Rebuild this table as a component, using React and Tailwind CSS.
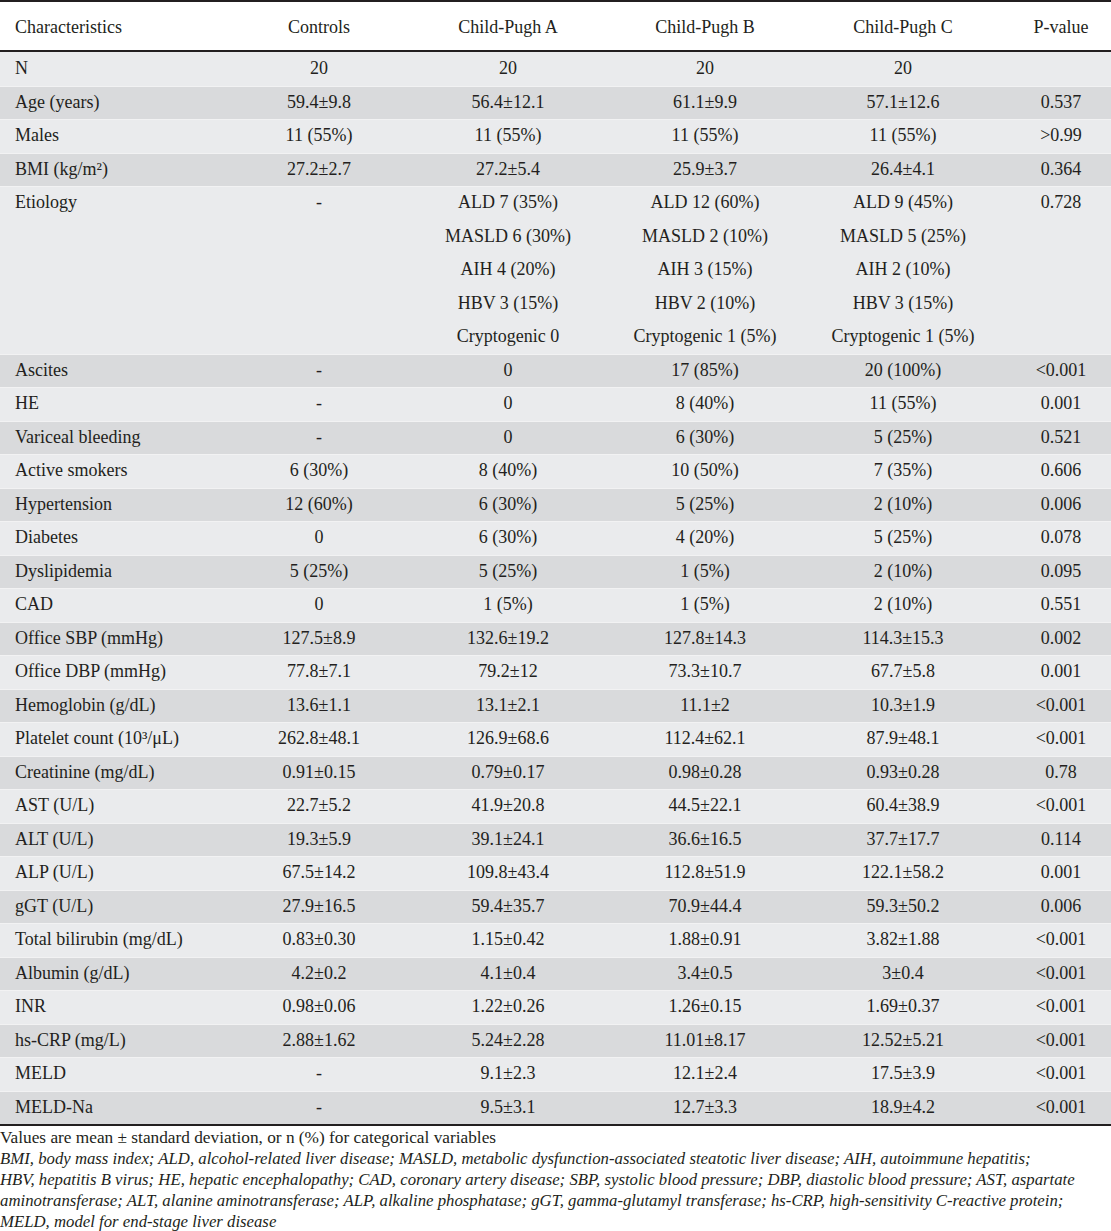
const rows = [
  ["N", "20", "20", "20", "20", ""],
  ["Age (years)", "59.4±9.8", "56.4±12.1", "61.1±9.9", "57.1±12.6", "0.537"],
  ["Males", "11 (55%)", "11 (55%)", "11 (55%)", "11 (55%)", ">0.99"],
  ["BMI (kg/m²)", "27.2±2.7", "27.2±5.4", "25.9±3.7", "26.4±4.1", "0.364"],
  [
    "Etiology",
    "-",
    ["ALD 7 (35%)", "MASLD 6 (30%)", "AIH 4 (20%)", "HBV 3 (15%)", "Cryptogenic 0"],
    ["ALD 12 (60%)", "MASLD 2 (10%)", "AIH 3 (15%)", "HBV 2 (10%)", "Cryptogenic 1 (5%)"],
    ["ALD 9 (45%)", "MASLD 5 (25%)", "AIH 2 (10%)", "HBV 3 (15%)", "Cryptogenic 1 (5%)"],
    "0.728",
  ],
  ["Ascites", "-", "0", "17 (85%)", "20 (100%)", "<0.001"],
  ["HE", "-", "0", "8 (40%)", "11 (55%)", "0.001"],
  ["Variceal bleeding", "-", "0", "6 (30%)", "5 (25%)", "0.521"],
  ["Active smokers", "6 (30%)", "8 (40%)", "10 (50%)", "7 (35%)", "0.606"],
  ["Hypertension", "12 (60%)", "6 (30%)", "5 (25%)", "2 (10%)", "0.006"],
  ["Diabetes", "0", "6 (30%)", "4 (20%)", "5 (25%)", "0.078"],
  ["Dyslipidemia", "5 (25%)", "5 (25%)", "1 (5%)", "2 (10%)", "0.095"],
  ["CAD", "0", "1 (5%)", "1 (5%)", "2 (10%)", "0.551"],
  ["Office SBP (mmHg)", "127.5±8.9", "132.6±19.2", "127.8±14.3", "114.3±15.3", "0.002"],
  ["Office DBP (mmHg)", "77.8±7.1", "79.2±12", "73.3±10.7", "67.7±5.8", "0.001"],
  ["Hemoglobin (g/dL)", "13.6±1.1", "13.1±2.1", "11.1±2", "10.3±1.9", "<0.001"],
  ["Platelet count (10³/μL)", "262.8±48.1", "126.9±68.6", "112.4±62.1", "87.9±48.1", "<0.001"],
  ["Creatinine (mg/dL)", "0.91±0.15", "0.79±0.17", "0.98±0.28", "0.93±0.28", "0.78"],
  ["AST (U/L)", "22.7±5.2", "41.9±20.8", "44.5±22.1", "60.4±38.9", "<0.001"],
  ["ALT (U/L)", "19.3±5.9", "39.1±24.1", "36.6±16.5", "37.7±17.7", "0.114"],
  ["ALP (U/L)", "67.5±14.2", "109.8±43.4", "112.8±51.9", "122.1±58.2", "0.001"],
  ["gGT (U/L)", "27.9±16.5", "59.4±35.7", "70.9±44.4", "59.3±50.2", "0.006"],
  ["Total bilirubin (mg/dL)", "0.83±0.30", "1.15±0.42", "1.88±0.91", "3.82±1.88", "<0.001"],
  ["Albumin (g/dL)", "4.2±0.2", "4.1±0.4", "3.4±0.5", "3±0.4", "<0.001"],
  ["INR", "0.98±0.06", "1.22±0.26", "1.26±0.15", "1.69±0.37", "<0.001"],
  ["hs-CRP (mg/L)", "2.88±1.62", "5.24±2.28", "11.01±8.17", "12.52±5.21", "<0.001"],
  ["MELD", "-", "9.1±2.3", "12.1±2.4", "17.5±3.9", "<0.001"],
  ["MELD-Na", "-", "9.5±3.1", "12.7±3.3", "18.9±4.2", "<0.001"],
];

const grid = "grid grid-cols-[237px_164px_214px_180px_216px_100px]";

function Cell({ value, first }) {
  const lines = Array.isArray(value) ? value : [value];
  return (
    <div className={first ? "pl-[15px]" : "text-center"}>
      {lines.map((l, i) => (
        <div key={i} className="flex h-[33.5px] items-center justify-center whitespace-nowrap">
          <span className={first ? "mr-auto" : ""}>{l}</span>
        </div>
      ))}
    </div>
  );
}

export default function App() {
  return (
    <div className="w-[1111px] bg-white text-[18px] text-[#231f20] font-['Liberation_Serif',serif]">
      <div className={`${grid} h-[52px] items-center border-t-2 border-b-2 border-[#231f20] pt-[2px]`}>
        <div className="pl-[15px]">Characteristics</div>
        <div className="text-center">Controls</div>
        <div className="text-center">Child-Pugh A</div>
        <div className="text-center">Child-Pugh B</div>
        <div className="text-center">Child-Pugh C</div>
        <div className="text-center">P-value</div>
      </div>
      {rows.map((r, i) => (
        <div
          key={r[0]}
          className={`${grid} ${i === 0 ? "" : "shadow-[inset_0_1px_0_#f2f2f3]"} ${
            i % 2 === 0 ? "bg-[#eaebed]" : "bg-[#d9dadc]"
          }`}
        >
          {r.map((v, j) => (
            <Cell key={j} value={v} first={j === 0} />
          ))}
        </div>
      ))}
      <div className="border-t-2 border-[#231f20] pt-[1px] leading-[21px]">
        <p className="text-[17.3px]">Values are mean ± standard deviation, or n (%) for categorical variables</p>
        <p className="text-[16.75px] italic">
          BMI, body mass index; ALD, alcohol-related liver disease; MASLD, metabolic dysfunction-associated steatotic liver disease; AIH, autoimmune hepatitis;
          <br />
          HBV, hepatitis B virus; HE, hepatic encephalopathy; CAD, coronary artery disease; SBP, systolic blood pressure; DBP, diastolic blood pressure; AST, aspartate
          <br />
          aminotransferase; ALT, alanine aminotransferase; ALP, alkaline phosphatase; gGT, gamma-glutamyl transferase; hs-CRP, high-sensitivity C-reactive protein;
          <br />
          MELD, model for end-stage liver disease
        </p>
      </div>
    </div>
  );
}
